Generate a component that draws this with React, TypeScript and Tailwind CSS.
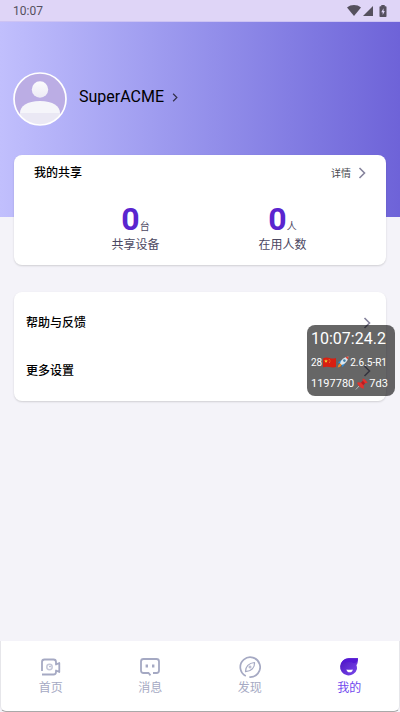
import { ReactNode } from 'react'

const Chevron = ({ className }: { className: string }) => (
  <svg viewBox="0 0 8 12" fill="none" stroke="currentColor" className={className}>
    <path d="M1.5 1 6.5 6l-5 5" strokeWidth="1.6" />
  </svg>
)

const StatusBar = () => (
  <div className="flex h-[22px] items-center justify-between border-b border-[#cdc3f3] bg-[#dfd5f7] pr-[11px] pl-[13px] text-[#55505e]">
    <span className="text-xs">10:07</span>
    <div className="flex items-center gap-[2px]">
      <svg viewBox="0 0 14 11" className="h-[11px] w-[14px]" fill="currentColor">
        <path d="M0 2.5C4-.8 10-.8 14 2.5L7 11z" />
      </svg>
      <svg viewBox="0 0 10 10" className="h-[10px] w-[10px]" fill="currentColor">
        <path d="M10 0v10H0z" />
      </svg>
      <svg viewBox="0 0 12 12" className="ml-[2px] h-3 w-3" fill="currentColor">
        <path d="M4.3 0h3.4v1.2h1q.8 0 .8.8v9.200q0 .8-.8.8H3.300q-.8 0-.8-.8V2q0-.8.8-.8h1z" />
        <path d="M6.500 3.200 4.300 7.200h1.400v2.900L7.800 6.100H6.500z" fill="#dfd5f7" />
      </svg>
    </div>
  </div>
)

const Avatar = () => (
  <svg viewBox="0 0 54 54" className="h-[54px] w-[54px]">
    <defs>
      <clipPath id="avatar">
        <circle cx="27" cy="27" r="25.5" />
      </clipPath>
      <linearGradient id="head" x1="0" x2="0" y1="0" y2="1">
        <stop offset="0" stopColor="#fbfbfd" />
        <stop offset="1" stopColor="#eceaf5" />
      </linearGradient>
    </defs>
    <circle cx="27" cy="27" r="26" fill="#bbade4" />
    <g clipPath="url(#avatar)">
      <circle cx="27" cy="17.5" r="8.2" fill="url(#head)" />
      <path d="M7 41c0-7 7-12 20-12s20 5 20 12v13H7z" fill="#f5f5fa" />
      <path d="M7 41h40v13H7z" fill="#eae8f4" />
    </g>
    <circle cx="27" cy="27" r="26" fill="none" stroke="#fff" strokeWidth="1.7" />
  </svg>
)

const Stat = ({ value, unit, label }: { value: number; unit: string; label: string }) => (
  <div className="flex flex-col items-center">
    <p className="flex h-8 items-baseline text-[10px] leading-8 text-[#4c4862]">
      <span className="text-[32px] font-bold text-[#5a25cf]">{value}</span>
      {unit}
    </p>
    <p className="text-xs leading-5 text-[#4c4862]">{label}</p>
  </div>
)

const MenuRow = ({ label }: { label: string }) => (
  <button className="flex h-12 w-full items-center justify-between pr-[15px] pl-3 text-xs font-medium text-black">
    {label}
    <Chevron className="h-3 w-2 text-[#85839c]" />
  </button>
)

const HomeIcon = () => (
  <svg viewBox="0 0 22 22" className="h-[22px] w-[22px]" fill="none" stroke="currentColor" strokeWidth="1.8">
    <path d="M2 15V6q0-2.500 2.500-2.500h9Q16 3.500 16 6v2.500l3.300-1.500v9L16 14.500V16q0 2.500-2.500 2.500H2" strokeLinejoin="round" />
    <circle cx="9.500" cy="11" r="2.700" strokeWidth="1.500" opacity=".65" />
    <circle cx="10" cy="10.600" r=".8" fill="currentColor" stroke="none" />
  </svg>
)

const MessageIcon = () => (
  <svg viewBox="0 0 22 22" className="h-[22px] w-[22px]" fill="none" stroke="currentColor" strokeWidth="1.8">
    <path d="M7.500 17H4.500Q2 17 2 14.500v-9Q2 3 4.500 3h13Q20 3 20 5.500v9q0 2.500-2.500 2.500H14M7.500 17h2l2 2.300" />
    <path d="M7.800 8.500v3M14.200 8.500v3" strokeWidth="2.400" />
  </svg>
)

const DiscoverIcon = () => (
  <svg viewBox="0 0 22 22" className="h-[22px] w-[22px]" fill="none" stroke="currentColor" strokeWidth="1.700">
    <path d="M6.800 20A9.900 9.900 0 1 1 10.300 21" />
    <path d="M15.500 6.500c.4 5-3 8.600-9 9.200C6.200 10.700 10 7 15.500 6.500z" strokeWidth="1.200" strokeLinejoin="round" />
    <circle cx="11" cy="11" r="1" strokeWidth="1" />
  </svg>
)

const MineIcon = () => (
  <svg viewBox="0 0 22 22" className="h-[22px] w-[22px]">
    <defs>
      <linearGradient id="mine" x1="0" x2="1" y1="0" y2="1">
        <stop offset="0" stopColor="#4b12bd" />
        <stop offset="1" stopColor="#7b4bed" />
      </linearGradient>
    </defs>
    <path d="M20 2.300H11A8.600 8.600 0 1 0 19 13q.1-2-.6-4Q20 8 20 2.300z" fill="url(#mine)" />
    <path d="M20 2.300H11Q5 2.600 3 8q7-3.300 13-.8 3.600-.4 4-4.900z" fill="#5519d4" />
    <path d="M8.500 13.400q2.800.8 6.200 0 0 2.800-3 2.800t-3.200-2.800z" fill="#fff" />
  </svg>
)

const tabs: { label: string; icon: ReactNode; active?: boolean }[] = [
  { label: '首页', icon: <HomeIcon /> },
  { label: '消息', icon: <MessageIcon /> },
  { label: '发现', icon: <DiscoverIcon /> },
  { label: '我的', icon: <MineIcon />, active: true },
]

const FlagIcon = () => (
  <svg viewBox="0 0 13 11" className="h-[11px] w-[13px]">
    <path d="M0 1.500q3-1.500 6.500-.5T13 1v9q-3 .8-6.500 0T0 10.300z" fill="#d91f11" />
    <path d="m3 2.300.5 1.200 1.300.1-1 .8.300 1.200L3 5l-1.100.6.3-1.200-1-.8 1.300-.1z" fill="#f8d12f" />
    <path d="M5.800 2h.8v.8h-.8zM6.600 3.600h.8v.8h-.8zM6 5.300h.8v.8H6z" fill="#f0a02b" />
  </svg>
)

const RocketIcon = () => (
  <svg viewBox="0 0 12 12" className="h-3 w-3">
    <path d="M5 3.500 1 6.500l2.500 1.200zM8.500 7 5.500 11.300 4.500 8.500z" fill="#2b8bd8" />
    <path d="M3 7.500Q4.500 1.500 11.500.5 10.500 7.500 4.500 9z" fill="#dde6ea" />
    <path d="M8.500 1.200q1.500-.6 3-.7-.1 1.500-.8 3z" fill="#df4434" />
    <circle cx="7.400" cy="4.600" r="1.300" fill="#427fa8" />
    <path d="M3 7.500 4.500 9Q3.500 11 .7 11.500 1 8.500 3 7.500z" fill="#f18a24" />
  </svg>
)

const PinIcon = () => (
  <svg viewBox="0 0 13 12" className="h-3 w-[13px]">
    <path d="M5 7 .8 11.500" stroke="#aeb8bd" strokeWidth="1" />
    <path d="M7.500.5q3 .3 5.200 4.500l-2.600.2-1.700 2q1 2 .2 3.500Q4 9.500 2 4.700q1.800-.8 4 .1l1.800-2z" fill="#e2322d" />
    <path d="m6 4.800 2.400 2.400 1.700-2-2.300-2.400z" fill="#b81d22" />
  </svg>
)

export default function App() {
  return (
    <div className="flex min-h-screen flex-col bg-[#f4f3f9] font-[Roboto,'Noto_Sans_CJK_SC',sans-serif]">
      <StatusBar />

      <header className="h-[195px] bg-linear-to-r from-[#c1bffd] to-[#6e63d8] px-[13px] pt-[50px]">
        <button className="flex items-center text-base text-black">
          <Avatar />
          <span className="ml-3 pb-1">SuperACME</span>
          <Chevron className="mb-1 ml-2 h-[9px] w-[6px] text-[#33304a]" />
        </button>
      </header>

      <main className="-mt-[62px] flex grow flex-col gap-[27px] px-[14px]">
        <section className="h-[110px] rounded-lg bg-white pt-2 shadow-[0_1px_2px_#00000026]">
          <div className="flex h-5 items-center justify-between pr-5 pl-5">
            <h2 className="text-xs font-medium text-black">我的共享</h2>
            <button className="flex items-center gap-[7px] text-[10px] text-[#4a4a50]">
              详情
              <Chevron className="h-3 w-2 text-[#85839c]" />
            </button>
          </div>
          <div className="mt-5 grid grid-cols-2 pr-[30px] pl-12">
            <Stat value={0} unit="台" label="共享设备" />
            <Stat value={0} unit="人" label="在用人数" />
          </div>
        </section>

        <section className="relative rounded-lg bg-white pt-[7px] pb-[6px] shadow-[0_1px_2px_#00000026]">
          <MenuRow label="帮助与反馈" />
          <MenuRow label="更多设置" />
          <div className="absolute top-[33px] -right-[9px] flex h-[71px] w-[88px] flex-col rounded-lg bg-black/60 px-1 pt-[3px] whitespace-nowrap text-white">
            <p className="text-base leading-[22px]">10:07:24.2</p>
            <p className="flex h-6 items-center gap-px text-[10px]">
              28
              <FlagIcon />
              <RocketIcon />
              2.6.5-R1
            </p>
            <p className="flex h-5 items-center gap-px text-[11px]">
              1197780
              <PinIcon />
              7d3
            </p>
          </div>
        </section>
      </main>

      <nav className="grid h-[71px] grid-cols-4 rounded-b-md border border-t-0 border-[#e6e6ea] border-b-[#a9a9a9] bg-white">
        {tabs.map(({ label, icon, active }) => (
          <button
            key={label}
            className={`flex flex-col items-center pt-[15px] text-xs ${active ? 'text-[#7048ee]' : 'text-[#a5a9c3]'}`}
          >
            {icon}
            <span className="leading-5">{label}</span>
          </button>
        ))}
      </nav>
    </div>
  )
}
